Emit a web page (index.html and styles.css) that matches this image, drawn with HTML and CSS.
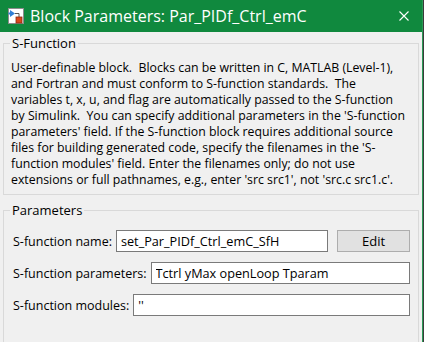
FILE: index.html
```html
<!DOCTYPE html>
<html>
<head>
<meta charset="utf-8">
<link rel="stylesheet" href="styles.css">
</head>
<body>
<div class="window">
  <div class="titlebar">
    <svg class="app-icon" width="16" height="16" viewBox="0 0 16 16">
      <rect x="0.5" y="0.5" width="15" height="15" fill="#ffffff" stroke="#8c8c8c"/>
      <polygon points="2,2 2,9 7,5.5" fill="#2f7fd6"/>
      <rect x="0.5" y="4.5" width="1.5" height="2" fill="#2f7fd6"/>
      <polyline points="7,5.5 11,5.5 11,9" fill="none" stroke="#555" stroke-width="1"/>
      <rect x="8" y="9" width="6" height="6" fill="#d9471c" stroke="#8a2a10" stroke-width="0.8"/>
    </svg>
    <span class="title">Block Parameters: Par_PIDf_Ctrl_emC</span>
    <svg class="close" width="10" height="10" viewBox="0 0 10 10">
      <path d="M0.5 0.5 L9.5 9.5 M9.5 0.5 L0.5 9.5" stroke="#ffffff" stroke-width="1.1"/>
    </svg>
  </div>
  <div class="content">
    <fieldset class="group">
      <legend>S-Function</legend>
      <div class="desc-body">
        <p class="desc">User-definable block.  Blocks can be written in C, MATLAB (Level-1),
and Fortran and must conform to S-function standards.  The
variables t, x, u, and flag are automatically passed to the S-function
by Simulink.  You can specify additional parameters in the 'S-function
parameters' field. If the S-function block requires additional source
files for building generated code, specify the filenames in the 'S-
function modules' field. Enter the filenames only; do not use
extensions or full pathnames, e.g., enter 'src src1', not 'src.c src1.c'.</p>
      </div>
    </fieldset>
    <fieldset class="group params-group">
      <legend>Parameters</legend>
      <div class="params-body">
        <div class="row">
          <label class="lbl">S-function name:</label>
          <input class="field" type="text" value="set_Par_PIDf_Ctrl_emC_SfH">
          <button class="btn">Edit</button>
        </div>
        <div class="row">
          <label class="lbl">S-function parameters:</label>
          <input class="field" type="text" value="Tctrl yMax openLoop Tparam">
        </div>
        <div class="row">
          <label class="lbl">S-function modules:</label>
          <input class="field" type="text" value="''">
        </div>
      </div>
    </fieldset>
  </div>
</div>
</body>
</html>
```

FILE: styles.css
```css
html, body {
  margin: 0;
  padding: 0;
  background: #3b3b3b;
  width: 424px;
  height: 342px;
  overflow: hidden;
}
.window {
  width: 422px;
  height: 342px;
  overflow: hidden;
  background: #f0f0f0;
  border-right: 1px solid #2a9a55;
  font-family: "Open Sans", "Noto Sans", sans-serif;
  color: #000;
}
.titlebar {
  height: 32px;
  background: #10893e;
  display: flex;
  align-items: center;
  padding-left: 8px;
  box-sizing: border-box;
}
.app-icon {
  flex: none;
  margin-right: 6px;
}
.title {
  color: #ffffff;
  font-family: "Open Sans", "Noto Sans", sans-serif;
  font-size: 16px;
  flex: 1;
  white-space: nowrap;
  margin-top: -1px;
}
.close {
  flex: none;
  margin-right: 13px;
}
.content {
  padding: 3px 0 0 3px;
}
.group {
  margin: 0;
  padding: 0;
  width: 416px;
  box-sizing: border-box;
  border: 1px solid #d9d9d9;
  min-width: 0;
}
.group legend {
  font-size: 13px;
  line-height: 16px;
  padding: 0 2px;
  margin-left: 6px;
  color: #000;
}
.desc-body {
  padding: 9px 4px 6px 7px;
}
.desc {
  margin: 0;
  white-space: pre;
  font-size: 12.3px;
  line-height: 16px;
}
.params-group {
  margin-top: 7px;
}
.params-body {
  padding: 12px 8px 40px 9px;
}
.row {
  display: flex;
  align-items: center;
  height: 22px;
  margin-bottom: 10px;
}
.lbl {
  font-size: 12.5px;
  white-space: nowrap;
  margin-right: 4px;
}
.field {
  flex: 1;
  min-width: 0;
  height: 22px;
  box-sizing: border-box;
  border: 1px solid #7a7a7a;
  background: #ffffff;
  font-family: "Open Sans", "Noto Sans", sans-serif;
  font-size: 12.7px;
  padding: 0 4px;
  margin: 0;
  outline: none;
  color: #000;
}
.btn {
  flex: none;
  width: 73px;
  height: 22px;
  margin: 0 0 0 9px;
  background: #e1e1e1;
  border: 1px solid #adadad;
  font-family: "Open Sans", "Noto Sans", sans-serif;
  font-size: 13px;
  color: #000;
  padding: 0;
}
```
